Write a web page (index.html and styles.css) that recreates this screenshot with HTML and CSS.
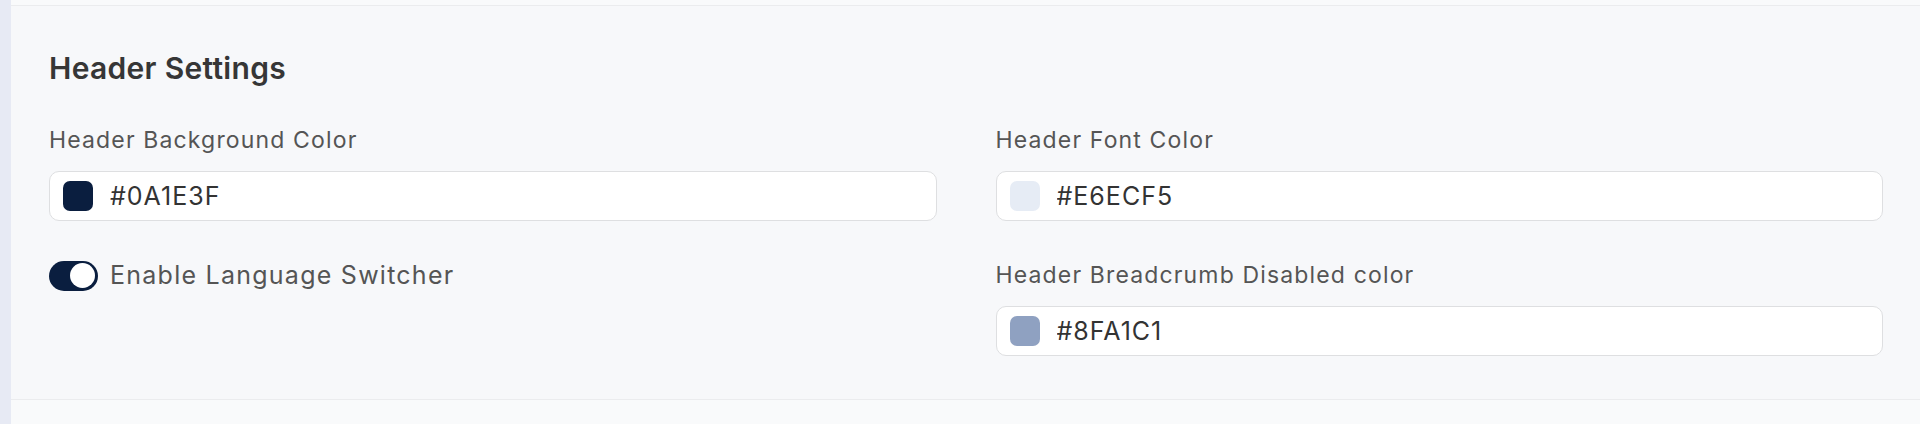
FILE: index.html
```html
<!DOCTYPE html>
<html lang="en">
<head>
  <meta charset="UTF-8" />
  <meta name="viewport" content="width=device-width, initial-scale=1.0" />
  <title>Header Settings</title>
  <link rel="stylesheet" href="styles.css">
</head>
<body>
  <div class="layout">
    <div class="rail"></div>
    <div class="main">
      <div class="top-strip"></div>
      <div class="settings">
        <h2>Header Settings</h2>
        <div class="settings-grid">
          <div class="form-group">
            <label for="headerBg">Header Background Color</label>
            <div class="color-input">
              <span class="swatch swatch-bg"></span>
              <input id="headerBg" type="text" value="#0A1E3F" />
            </div>
          </div>
          <div class="form-group">
            <label for="headerFont">Header Font Color</label>
            <div class="color-input">
              <span class="swatch swatch-font"></span>
              <input id="headerFont" type="text" value="#E6ECF5" />
            </div>
          </div>
          <div class="form-group">
            <label class="switch-row">
              <span class="switch on"><span class="knob"></span></span>
              Enable Language Switcher
            </label>
          </div>
          <div class="form-group">
            <label for="breadcrumb">Header Breadcrumb Disabled color</label>
            <div class="color-input">
              <span class="swatch swatch-crumb"></span>
              <input id="breadcrumb" type="text" value="#8FA1C1" />
            </div>
          </div>
        </div>
      </div>
      <div class="bottom-strip"></div>
    </div>
  </div>
</body>
</html>
```

FILE: styles.css
```css
body {
  margin: 0;
  font-family: Inter, 'Noto Sans', sans-serif;
  background: #f7f8fa;
}
.layout {
  display: flex;
  min-height: 424px;
}
.rail {
  width: 11px;
  background: #e7eaf4;
}
.main {
  flex: 1;
  display: flex;
  flex-direction: column;
}
.top-strip {
  height: 5px;
  background: #f9fafb;
  border-bottom: 1px solid #ebecee;
}
.settings {
  padding: 44px 37px 43px 38px;
  border-bottom: 1px solid #ebecee;
}
h2 {
  margin: 0 0 38px;
  font-size: 30px;
  line-height: 36px;
  font-weight: 600;
  letter-spacing: 0.01em;
  color: #363636;
}
.settings-grid {
  display: grid;
  grid-template-columns: 1fr 1fr;
  column-gap: 59px;
  row-gap: 38px;
}
.form-group {
  display: flex;
  flex-direction: column;
}
label {
  font-size: 23px;
  line-height: 33px;
  letter-spacing: 0.05em;
  color: #555;
  margin-bottom: 14px;
}
.color-input {
  display: flex;
  align-items: center;
  gap: 17px;
  height: 48px;
  padding: 0 13px;
  background: #fff;
  border: 1px solid #dedfe1;
  border-radius: 10px;
}
.swatch {
  width: 30px;
  height: 30px;
  border-radius: 7px;
  flex-shrink: 0;
}
.swatch-bg { background: #0a1e3f; }
.swatch-font { background: #e6ecf5; }
.swatch-crumb { background: #8fa1c1; }
.color-input input {
  flex: 1;
  border: none;
  outline: none;
  padding: 0;
  background: transparent;
  font-family: inherit;
  font-size: 25px;
  letter-spacing: 0.04em;
  color: #333;
}
.switch-row {
  display: flex;
  align-items: center;
  gap: 12px;
  margin: 0;
  font-size: 25px;
  letter-spacing: 0.05em;
}
.switch {
  width: 49px;
  height: 30px;
  border-radius: 15px;
  background: #0a1e3f;
  display: flex;
  align-items: center;
  justify-content: flex-end;
  padding: 0 3px;
  box-sizing: border-box;
}
.knob {
  width: 25px;
  height: 25px;
  border-radius: 50%;
  background: #fff;
}
.bottom-strip {
  flex: 1;
  background: #f9fafb;
}
```
